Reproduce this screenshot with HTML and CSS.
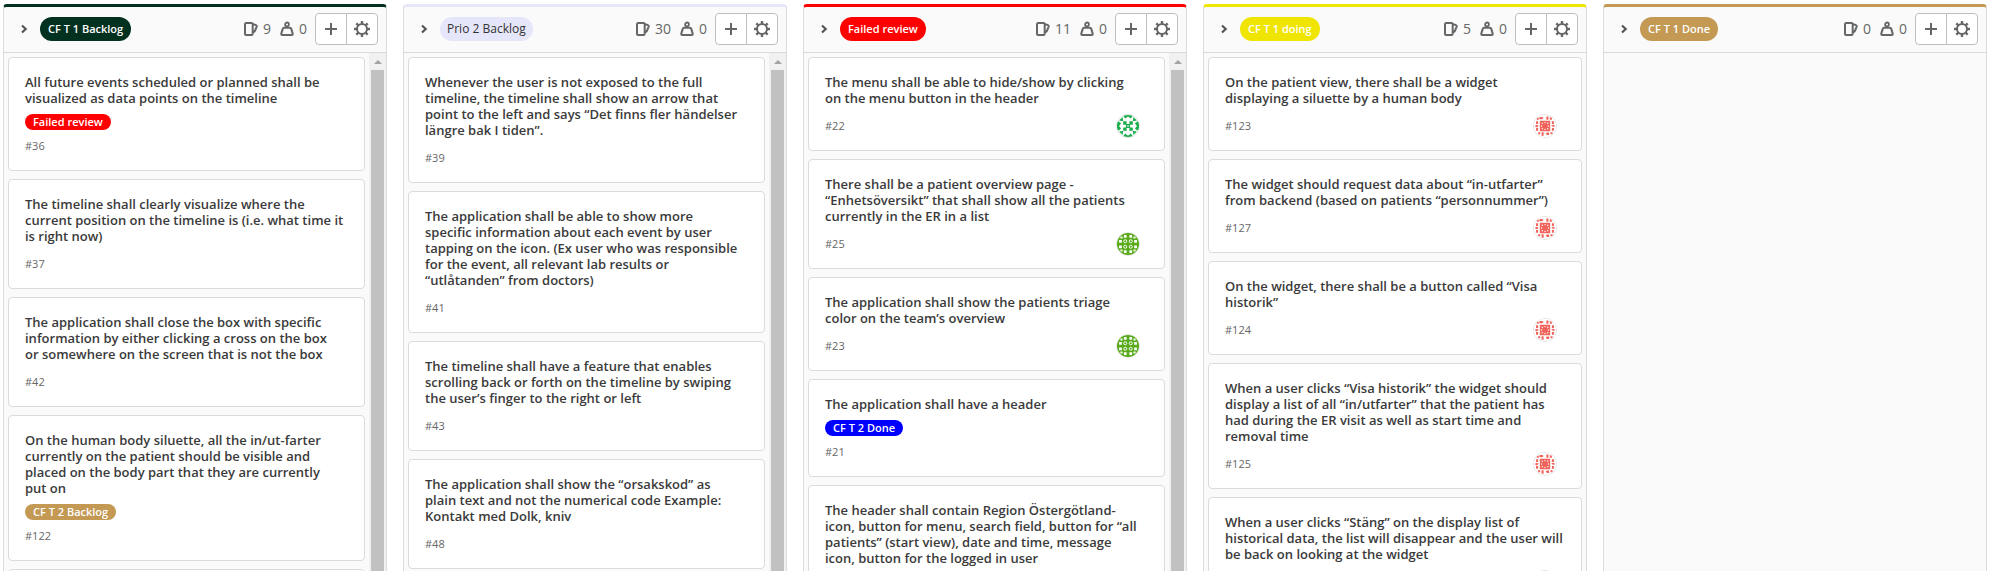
FILE: index.html
```html
<!DOCTYPE html>
<html lang="en">
<head>
<meta charset="utf-8">
<title>Issue board</title>
<link rel="stylesheet" href="styles.css">
</head>
<body>
<svg class="sprite" aria-hidden="true">
  <symbol id="chevron" viewBox="0 0 8 10"><path d="M2 1.500 5.700 5 2 8.500" fill="none" stroke="currentColor" stroke-width="2.200"/></symbol>
  <symbol id="issues" viewBox="0 0 16 16"><path d="M3.200 2h5.300c.8 0 1.200.4 1.200 1.200v9.600c0 .8-.4 1.200-1.200 1.200H3.200C2.400 14 2 13.600 2 12.800V3.200C2 2.400 2.400 2 3.200 2Zm6.500 1 3.200 1.100c.8.3 1 .8.8 1.500L11.800 10.200 9.700 11.800" fill="none" stroke="currentColor" stroke-width="2"/></symbol>
  <symbol id="weight" viewBox="0 0 16 16"><circle cx="8" cy="3.400" r="1.900" fill="none" stroke="currentColor" stroke-width="1.800"/><path d="M5 6.700h6c.6 0 1 .3 1.200.9l1.500 5c.2.8-.2 1.400-1 1.400H3.300c-.8 0-1.200-.6-1-1.400l1.500-5c.2-.6.6-.9 1.200-.9Z" fill="none" stroke="currentColor" stroke-width="2"/></symbol>
  <symbol id="plus" viewBox="0 0 16 16"><path d="M8 2v12M2 8h12" stroke="currentColor" stroke-width="2"/></symbol>
  <symbol id="gear" viewBox="0 0 16 16"><circle cx="8" cy="8" r="5" fill="none" stroke="currentColor" stroke-width="2"/><path d="M8 0v3M8 13v3M0 8h3M13 8h3M2.300 2.300l2.200 2.200M11.500 11.500l2.200 2.200M13.700 2.300l-2.200 2.200M4.500 11.500l-2.200 2.200" stroke="currentColor" stroke-width="2.400"/></symbol>
  <symbol id="avatar-mint" viewBox="0 0 32 32">
    <path fill="#fff" d="M0 0h32v32H0z"/>
    <g fill="#1aad4b"><path d="M8 0h16l-4 5-4-3-4 3zM8 32h16l-4-5-4 3-4-3zM0 8v16l6-4-3-4 3-4zM32 8v16l-6-4 3-4-3-4z"/><path d="M3 8l5-5 1 6zM29 8l-5-5-1 6zM3 24l5 5 1-6zM29 24l-5 5-1-6z"/><path d="M9 9h5v5H9zM18 9h5v5h-5zM9 18h5v5H9zM18 18h5v5h-5zM13 13h6v6h-6z"/></g>
    <path fill="#fff" d="M15 15h2v2h-2z"/>
  </symbol>
  <symbol id="avatar-green" viewBox="0 0 32 32">
    <path fill="#58ab19" d="M0 0h32v32H0z"/>
    <g fill="#fff"><path d="M10 3h4v4h-4zM18 3h4v4h-4zM10 25h4v4h-4zM18 25h4v4h-4zM3 10h4v4H3zM3 18h4v4H3zM25 10h4v4h-4zM25 18h4v4h-4zM5 5h3v3H5zM24 5h3v3h-3zM5 24h3v3H5zM24 24h3v3h-3z"/></g>
    <g fill="#58ab19" stroke="#fff" stroke-width="1.400"><circle cx="12" cy="12" r="2.200"/><circle cx="20" cy="12" r="2.200"/><circle cx="12" cy="20" r="2.200"/><circle cx="20" cy="20" r="2.200"/></g>
  </symbol>
  <symbol id="avatar-coral" viewBox="0 0 32 32">
    <path fill="#fff" d="M0 0h32v32H0z"/>
    <g fill="#f0635a"><path d="M8.500 8.500h15v15h-15z"/><path d="M8 3h4l2 1.500L12 6H8zM18 2h3v5h-3zM23 3l3 1v3h-3zM26 9h3v4h-3zM25 15l3-1 3 2-3 1.500zM26 19h3v4h-3zM24 25h3v3h-3zM17 27l2-1.500h3V29h-3zM11 25h3v5h-3zM6 25h3v3H6zM3 19h3v4H3zM1 16l3-2 3 1.500L4 18zM3 9h3v4H3zM4 4h3v3H4z"/></g>
    <g fill="#fff"><circle cx="12" cy="12" r="1"/><circle cx="20" cy="12" r="1"/><circle cx="12" cy="20" r="1"/><circle cx="20" cy="20" r="1"/><circle cx="16" cy="11" r="1"/><circle cx="16" cy="21" r="1"/><circle cx="11" cy="16" r="1"/><circle cx="21" cy="16" r="1"/></g>
  </symbol>
</svg>

<main class="board">
  <section class="list forest">
    <header class="list-header">
      <button class="toggle" aria-label="Collapse list"><svg><use href="#chevron"/></svg></button>
      <h2 class="pill">CF T 1 Backlog</h2>
      <span class="count"><svg><use href="#issues"/></svg>9</span>
      <span class="count"><svg><use href="#weight"/></svg>0</span>
      <div class="actions"><button aria-label="New issue"><svg><use href="#plus"/></svg></button><button aria-label="List settings"><svg><use href="#gear"/></svg></button></div>
    </header>
    <div class="list-body">
      <div class="cards">
        <article class="card"><a class="title" href="#">All future events scheduled or planned shall be<br>visualized as data points on the timeline</a><div class="labels"><a class="label red" href="#">Failed review</a></div><footer>#36</footer></article>
        <article class="card"><a class="title" href="#">The timeline shall clearly visualize where the<br>current position on the timeline is (i.e. what time it<br>is right now)</a><footer>#37</footer></article>
        <article class="card"><a class="title" href="#">The application shall close the box with specific<br>information by either clicking a cross on the box<br>or somewhere on the screen that is not the box</a><footer>#42</footer></article>
        <article class="card"><a class="title" href="#">On the human body siluette, all the in/ut-farter<br>currently on the patient should be visible and<br>placed on the body part that they are currently<br>put on</a><div class="labels"><a class="label sand" href="#">CF T 2 Backlog</a></div><footer>#122</footer></article>
        <article class="card"></article>
      </div>
      <div class="scrollbar"><i class="arrow"></i><i class="thumb"></i></div>
    </div>
  </section>

  <section class="list lavender">
    <header class="list-header">
      <button class="toggle" aria-label="Collapse list"><svg><use href="#chevron"/></svg></button>
      <h2 class="pill">Prio 2 Backlog</h2>
      <span class="count"><svg><use href="#issues"/></svg>30</span>
      <span class="count"><svg><use href="#weight"/></svg>0</span>
      <div class="actions"><button aria-label="New issue"><svg><use href="#plus"/></svg></button><button aria-label="List settings"><svg><use href="#gear"/></svg></button></div>
    </header>
    <div class="list-body">
      <div class="cards">
        <article class="card"><a class="title" href="#">Whenever the user is not exposed to the full<br>timeline, the timeline shall show an arrow that<br>point to the left and says “Det finns fler händelser<br>längre bak I tiden”.</a><footer>#39</footer></article>
        <article class="card"><a class="title" href="#">The application shall be able to show more<br>specific information about each event by user<br>tapping on the icon. (Ex user who was responsible<br>for the event, all relevant lab results or<br>“utlåtanden” from doctors)</a><footer>#41</footer></article>
        <article class="card"><a class="title" href="#">The timeline shall have a feature that enables<br>scrolling back or forth on the timeline by swiping<br>the user’s finger to the right or left</a><footer>#43</footer></article>
        <article class="card"><a class="title" href="#">The application shall show the “orsakskod” as<br>plain text and not the numerical code Example:<br>Kontakt med Dolk, kniv</a><footer>#48</footer></article>
      </div>
      <div class="scrollbar"><i class="arrow"></i><i class="thumb"></i></div>
    </div>
  </section>

  <section class="list red">
    <header class="list-header">
      <button class="toggle" aria-label="Collapse list"><svg><use href="#chevron"/></svg></button>
      <h2 class="pill">Failed review</h2>
      <span class="count"><svg><use href="#issues"/></svg>11</span>
      <span class="count"><svg><use href="#weight"/></svg>0</span>
      <div class="actions"><button aria-label="New issue"><svg><use href="#plus"/></svg></button><button aria-label="List settings"><svg><use href="#gear"/></svg></button></div>
    </header>
    <div class="list-body">
      <div class="cards">
        <article class="card"><a class="title" href="#">The menu shall be able to hide/show by clicking<br>on the menu button in the header</a><footer>#22<svg class="avatar"><use href="#avatar-mint"/></svg></footer></article>
        <article class="card"><a class="title" href="#">There shall be a patient overview page -<br>“Enhetsöversikt” that shall show all the patients<br>currently in the ER in a list</a><footer>#25<svg class="avatar"><use href="#avatar-green"/></svg></footer></article>
        <article class="card"><a class="title" href="#">The application shall show the patients triage<br>color on the team’s overview</a><footer>#23<svg class="avatar"><use href="#avatar-green"/></svg></footer></article>
        <article class="card"><a class="title" href="#">The application shall have a header</a><div class="labels"><a class="label blue" href="#">CF T 2 Done</a></div><footer>#21</footer></article>
        <article class="card"><a class="title" href="#">The header shall contain Region Östergötland-<br>icon, button for menu, search field, button for “all<br>patients” (start view), date and time, message<br>icon, button for the logged in user</a><footer></footer></article>
      </div>
      <div class="scrollbar"><i class="arrow"></i><i class="thumb"></i></div>
    </div>
  </section>

  <section class="list yellow">
    <header class="list-header">
      <button class="toggle" aria-label="Collapse list"><svg><use href="#chevron"/></svg></button>
      <h2 class="pill">CF T 1 doing</h2>
      <span class="count"><svg><use href="#issues"/></svg>5</span>
      <span class="count"><svg><use href="#weight"/></svg>0</span>
      <div class="actions"><button aria-label="New issue"><svg><use href="#plus"/></svg></button><button aria-label="List settings"><svg><use href="#gear"/></svg></button></div>
    </header>
    <div class="list-body">
      <div class="cards">
        <article class="card"><a class="title" href="#">On the patient view, there shall be a widget<br>displaying a siluette by a human body</a><footer>#123<svg class="avatar"><use href="#avatar-coral"/></svg></footer></article>
        <article class="card"><a class="title" href="#">The widget should request data about “in-utfarter”<br>from backend (based on patients “personnummer”)</a><footer>#127<svg class="avatar"><use href="#avatar-coral"/></svg></footer></article>
        <article class="card"><a class="title" href="#">On the widget, there shall be a button called “Visa<br>historik”</a><footer>#124<svg class="avatar"><use href="#avatar-coral"/></svg></footer></article>
        <article class="card"><a class="title" href="#">When a user clicks “Visa historik” the widget should<br>display a list of all “in/utfarter” that the patient has<br>had during the ER visit as well as start time and<br>removal time</a><footer>#125<svg class="avatar"><use href="#avatar-coral"/></svg></footer></article>
        <article class="card"><a class="title" href="#">When a user clicks “Stäng” on the display list of<br>historical data, the list will disappear and the user will<br>be back on looking at the widget</a><footer><svg class="avatar"><use href="#avatar-coral"/></svg></footer></article>
      </div>
    </div>
  </section>

  <section class="list sand">
    <header class="list-header">
      <button class="toggle" aria-label="Collapse list"><svg><use href="#chevron"/></svg></button>
      <h2 class="pill">CF T 1 Done</h2>
      <span class="count"><svg><use href="#issues"/></svg>0</span>
      <span class="count"><svg><use href="#weight"/></svg>0</span>
      <div class="actions"><button aria-label="New issue"><svg><use href="#plus"/></svg></button><button aria-label="List settings"><svg><use href="#gear"/></svg></button></div>
    </header>
    <div class="list-body"></div>
  </section>
</main>
</body>
</html>
```

FILE: styles.css
```css
* { box-sizing: border-box; }

body {
  margin: 0;
  background: #fff;
  color: #3a3a3a;
  font-family: "Open Sans", "Noto Sans", sans-serif;
  font-size: 13px;
  line-height: 16px;
}

a { color: inherit; text-decoration: none; }
svg { display: block; }
.sprite { display: none; }

.forest { --accent: #033120; --on-accent: #fff; }
.lavender { --accent: #e6e6fa; --on-accent: #333; }
.red { --accent: #f00; --on-accent: #fff; }
.yellow { --accent: #f0e500; --on-accent: #fff; }
.sand { --accent: #c39953; --on-accent: #fff; }
.blue { --accent: #00f; --on-accent: #fff; }

.board {
  display: grid;
  grid-template-columns: repeat(5, minmax(0, 1fr));
  gap: 16px;
  height: 100vh;
  padding: 4px 8px 0 3px;
  overflow: hidden;
}

.list {
  display: flex;
  flex-direction: column;
  min-height: 0;
  background: #fafafa;
  border: 1px solid #dbdbdb;
  border-top: 3px solid var(--accent);
  border-bottom: 0;
  border-radius: 4px 4px 0 0;
}

.list-header {
  display: flex;
  align-items: center;
  flex: none;
  padding: 6px 8px 7px 16px;
  border-bottom: 1px solid #dbdbdb;
  color: #666;
}

.toggle {
  width: 20px;
  padding: 0;
  border: 0;
  background: none;
  color: #555;
}
.toggle svg { width: 8px; height: 10px; }

.pill {
  margin: 0 auto 0 0;
  padding: 0 8px;
  border-radius: 12px;
  background: var(--accent);
  color: var(--on-accent);
  font-size: 11px;
  font-weight: 600;
  line-height: 24px;
}
.lavender .pill { font-size: 12px; font-weight: 400; padding: 0 7px; }

.count {
  display: flex;
  align-items: center;
  gap: 4px;
  margin-right: 8px;
  font-size: 14px;
}
.count svg { width: 16px; height: 16px; }

.actions { display: flex; }
.actions button {
  display: grid;
  place-items: center;
  width: 32px;
  height: 32px;
  padding: 0;
  border: 1px solid #bfbfbf;
  border-radius: 4px 0 0 4px;
  background: #fff;
  color: #666;
}
.actions button + button { margin-left: -1px; border-radius: 0 4px 4px 0; }
.actions svg { width: 16px; height: 16px; }

.list-body { display: flex; flex: 1; min-height: 0; overflow: hidden; }

.cards {
  display: flex;
  flex: 1;
  flex-direction: column;
  gap: 8px;
  min-width: 0;
  padding: 4px;
}

.card {
  flex: none;
  padding: 16px 16px 12px;
  background: #fff;
  border: 1px solid #dbdbdb;
  border-radius: 4px;
}

.title {
  display: block;
  margin-bottom: 4px;
  font-weight: 600;
  white-space: nowrap;
}

.labels { display: flex; padding-top: 4px; }
.label {
  padding: 0 8px;
  border-radius: 8px;
  background: var(--accent);
  color: var(--on-accent);
  font-size: 11px;
  font-weight: 600;
}

.card footer {
  display: flex;
  align-items: center;
  justify-content: space-between;
  height: 24px;
  margin-top: 4px;
  color: #666;
  font-size: 11px;
}
.title + footer { margin-top: 8px; }

.avatar {
  width: 24px;
  height: 24px;
  margin: 0 8px 0 auto;
  border: 1px solid #e4e4e4;
  border-radius: 50%;
}

.scrollbar {
  display: flex;
  flex: none;
  flex-direction: column;
  align-items: center;
  width: 17px;
  background: #f1f1f1;
}
.arrow {
  margin: 7px 0 6px;
  border: 4px solid transparent;
  border-top: 0;
  border-bottom-color: #a3a3a3;
}
.thumb { flex: 1; width: 13px; background: #c1c1c1; }
```
